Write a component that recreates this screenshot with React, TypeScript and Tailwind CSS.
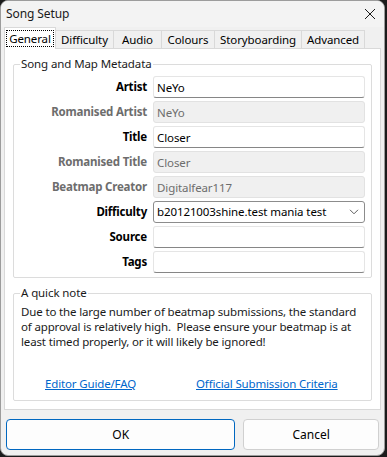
import type { ReactNode } from 'react'

const tabs = [
  { name: 'General', width: 'w-[52px]' },
  { name: 'Difficulty', width: 'w-[58px]' },
  { name: 'Audio', width: 'w-[48px]' },
  { name: 'Colours', width: 'w-[53px]' },
  { name: 'Storyboarding', width: 'w-[87px]' },
  { name: 'Advanced', width: 'w-[63px]' },
]

type Row = {
  label: string
  value: string
  disabled?: boolean
  select?: boolean
}

const rows: Row[] = [
  { label: 'Artist', value: 'NeYo' },
  { label: 'Romanised Artist', value: 'NeYo', disabled: true },
  { label: 'Title', value: 'Closer' },
  { label: 'Romanised Title', value: 'Closer', disabled: true },
  { label: 'Beatmap Creator', value: 'Digitalfear117', disabled: true },
  { label: 'Difficulty', value: 'b20121003shine.test mania test', select: true },
  { label: 'Source', value: '' },
  { label: 'Tags', value: '' },
]

function GroupBox({ title, className, children }: { title: string; className?: string; children: ReactNode }) {
  return (
    <fieldset className={`mx-[8px] shrink-0 rounded-[2px] border border-[#dcdcdc] ${className ?? ''}`}>
      <legend className="ml-[6px] px-[1px] text-[11.5px] leading-[16px] tracking-[-0.1px] text-[#1a1a1a]">{title}</legend>
      {children}
    </fieldset>
  )
}

function Field({ row }: { row: Row }) {
  if (row.select) {
    return (
      <div className="flex h-[22px] items-center justify-between rounded-[3px] border border-[#8c8c8c] bg-white pl-[3px] pr-[5px]">
        <span className="text-[11.5px] tracking-[-0.1px] text-black">{row.value}</span>
        <svg width="10" height="6" viewBox="0 0 10 6" fill="none" stroke="#5c5c5c" strokeWidth="1">
          <path d="M1 0.8 L5 4.8 L9 0.8" />
        </svg>
      </div>
    )
  }
  return (
    <input
      readOnly
      disabled={row.disabled}
      defaultValue={row.value}
      className={`h-[22px] w-full rounded-[3px] border px-[3px] text-[11.5px] tracking-[-0.1px] outline-none ${
        row.disabled
          ? 'border-[#e2e2e2] bg-[#f0f0f0] text-[#6d6d6d]'
          : 'border-[#e5e5e5] border-b-[#868686] bg-white text-black'
      }`}
    />
  )
}

export default function App() {
  return (
    <div className="h-[457px] w-[387px] bg-[#1b1b1b] font-['Segoe_UI','Noto_Sans',sans-serif]">
      <div className="flex h-[456px] w-[385px] flex-col overflow-hidden rounded-[8px] border border-[#9c9c9c] bg-[#f0f0f0]">
        <div className="flex h-[26px] shrink-0 items-center justify-between bg-[#f3f3f3] pl-[5px] pr-[8px]">
          <span className="text-[12px] tracking-[-0.1px] text-[#1a1a1a]">Song Setup</span>
          <svg width="12" height="12" viewBox="0 0 12 12" stroke="#1a1a1a" strokeWidth="1">
            <path d="M1 1 L11 11 M11 1 L1 11" />
          </svg>
        </div>

        <div className="flex h-[21px] shrink-0 items-end pl-[3px] text-[11.5px] tracking-[-0.1px]">
          {tabs.map((tab, i) =>
            i === 0 ? (
              <div
                key={tab.name}
                className={`relative z-10 -mb-px flex h-[22px] ${tab.width} items-center justify-center border border-b-0 border-[#d9d9d9] bg-white`}
              >
                <span className="border border-dotted border-black px-[2px] leading-[15px] text-black">{tab.name}</span>
              </div>
            ) : (
              <div
                key={tab.name}
                className={`flex h-[18px] ${tab.width} items-center justify-center border border-b-0 border-l-0 border-[#d9d9d9] bg-[#f0f0f0] text-black`}
              >
                {tab.name}
              </div>
            ),
          )}
        </div>

        <div className="mx-[3px] flex h-[362px] shrink-0 flex-col border border-[#d9d9d9] bg-white pt-[7px]">
          <GroupBox title="Song and Map Metadata" className="pb-[4px]">
            <div className="grid grid-cols-[133px_1fr] gap-x-[6px] gap-y-[3px] pr-[6px] pt-[4px]">
              {rows.map((row) => (
                <div key={row.label} className="contents">
                  <div
                    className={`flex h-[22px] items-center justify-end text-[11.5px] font-bold tracking-[-0.2px] ${
                      row.disabled ? 'text-[#6d6d6d]' : 'text-black'
                    }`}
                  >
                    {row.label}
                  </div>
                  <Field row={row} />
                </div>
              ))}
            </div>
          </GroupBox>

          <GroupBox title="A quick note" className="mt-[7px] h-[116px]">
            <p className="whitespace-nowrap px-[7px] pt-[3px] text-[11.5px] leading-[15px] tracking-[-0.15px] text-[#1a1a1a]">
              Due to the large number of beatmap submissions, the standard
              <br />
              of approval is relatively high.&nbsp; Please ensure your beatmap is at
              <br />
              least timed properly, or it will likely be ignored!
            </p>
            <div className="mt-[27px] flex pl-[31px] text-[11.5px] leading-[16px] tracking-[-0.15px] text-[#0066cc] underline">
              <span className="w-[151px]">Editor Guide/FAQ</span>
              <span>Official Submission Criteria</span>
            </div>
          </GroupBox>
        </div>

        <div className="mt-[9px] flex gap-[8px] px-[5px]">
          <button className="h-[31px] w-[230px] rounded-[4px] border border-[#0067c0] bg-[#fdfdfd] text-[12px] text-black">
            OK
          </button>
          <button className="h-[31px] w-[136px] rounded-[4px] border border-[#d0d0d0] bg-[#fdfdfd] text-[12px] text-black">
            Cancel
          </button>
        </div>
      </div>
    </div>
  )
}
